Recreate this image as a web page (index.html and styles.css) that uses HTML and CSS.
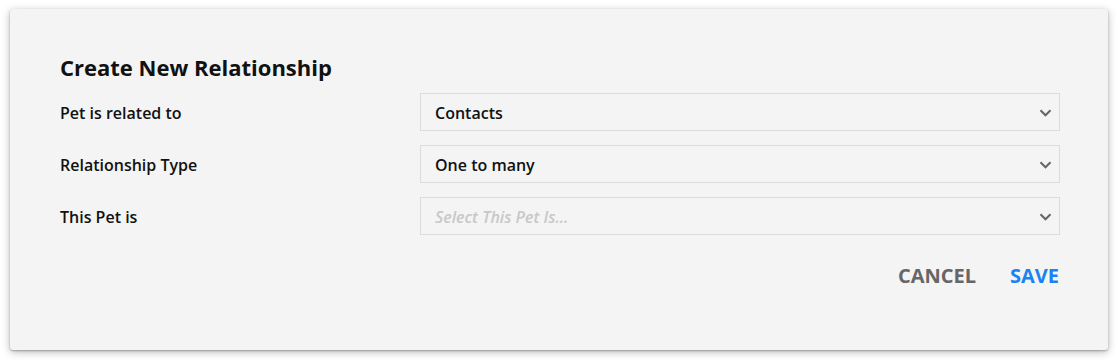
FILE: index.html
```html
<!DOCTYPE html>
<html>
<head>
<meta charset="utf-8">
<link rel="stylesheet" href="styles.css">
</head>
<body>
<div class="page">
  <div class="dialog">
    <h2 class="title">Create New Relationship</h2>
    <div class="form">
      <label class="label">Pet is related to</label>
      <div class="select">
        <span class="value">Contacts</span>
        <svg class="chev" width="13" height="8" viewBox="0 0 13 8"><path d="M1.5 1.3 L6.5 6.3 L11.5 1.3" fill="none" stroke="#666" stroke-width="2.1"/></svg>
      </div>
      <label class="label">Relationship Type</label>
      <div class="select">
        <span class="value">One to many</span>
        <svg class="chev" width="13" height="8" viewBox="0 0 13 8"><path d="M1.5 1.3 L6.5 6.3 L11.5 1.3" fill="none" stroke="#666" stroke-width="2.1"/></svg>
      </div>
      <label class="label">This Pet is</label>
      <div class="select">
        <span class="value placeholder">Select This Pet Is...</span>
        <svg class="chev" width="13" height="8" viewBox="0 0 13 8"><path d="M1.5 1.3 L6.5 6.3 L11.5 1.3" fill="none" stroke="#666" stroke-width="2.1"/></svg>
      </div>
    </div>
    <div class="actions">
      <button class="btn cancel">CANCEL</button>
      <button class="btn save">SAVE</button>
    </div>
  </div>
</div>
</body>
</html>
```
FILE: styles.css
```css
html, body {
  margin: 0;
  padding: 0;
  background: #ffffff;
  font-family: "Open Sans", "Liberation Sans", sans-serif;
}
.page {
  padding: 9px 11px 13px 10px;
}
.dialog {
  background: #f4f4f4;
  border-radius: 3px;
  box-shadow: 0 2px 8px rgba(0,0,0,0.28), 0 1px 2px rgba(0,0,0,0.25);
  height: 341px;
  box-sizing: border-box;
  padding: 43px 48px 0 50px;
}
.title {
  margin: 0;
  font-size: 22px;
  line-height: 30px;
  font-weight: 700;
  color: #111;
}
.form {
  margin-top: 11px;
  display: grid;
  grid-template-columns: 360px 1fr;
  row-gap: 14px;
  align-items: center;
}
.label {
  font-size: 16px;
  font-weight: 600;
  color: #111;
  padding-top: 1px;
}
.select {
  height: 38px;
  box-sizing: border-box;
  border: 1px solid #dcdcdc;
  background: #f4f4f4;
  display: flex;
  align-items: center;
  justify-content: space-between;
  padding: 0 7px 0 14px;
}
.value {
  font-size: 16px;
  font-weight: 600;
  color: #111;
  padding-top: 2px;
}
.placeholder {
  color: #c8c8c8;
  font-style: italic;
}
.chev {
  display: block;
  margin-top: 2px;
}
.actions {
  margin-top: 29px;
  padding-right: 1px;
  display: flex;
  justify-content: flex-end;
  gap: 34px;
}
.btn {
  background: none;
  border: none;
  padding: 0;
  font-family: "Open Sans", "Liberation Sans", sans-serif;
  font-size: 20px;
  line-height: 24px;
  font-weight: 700;
  cursor: pointer;
}
.cancel { color: #666666; }
.save { color: #1a82f2; }
```
